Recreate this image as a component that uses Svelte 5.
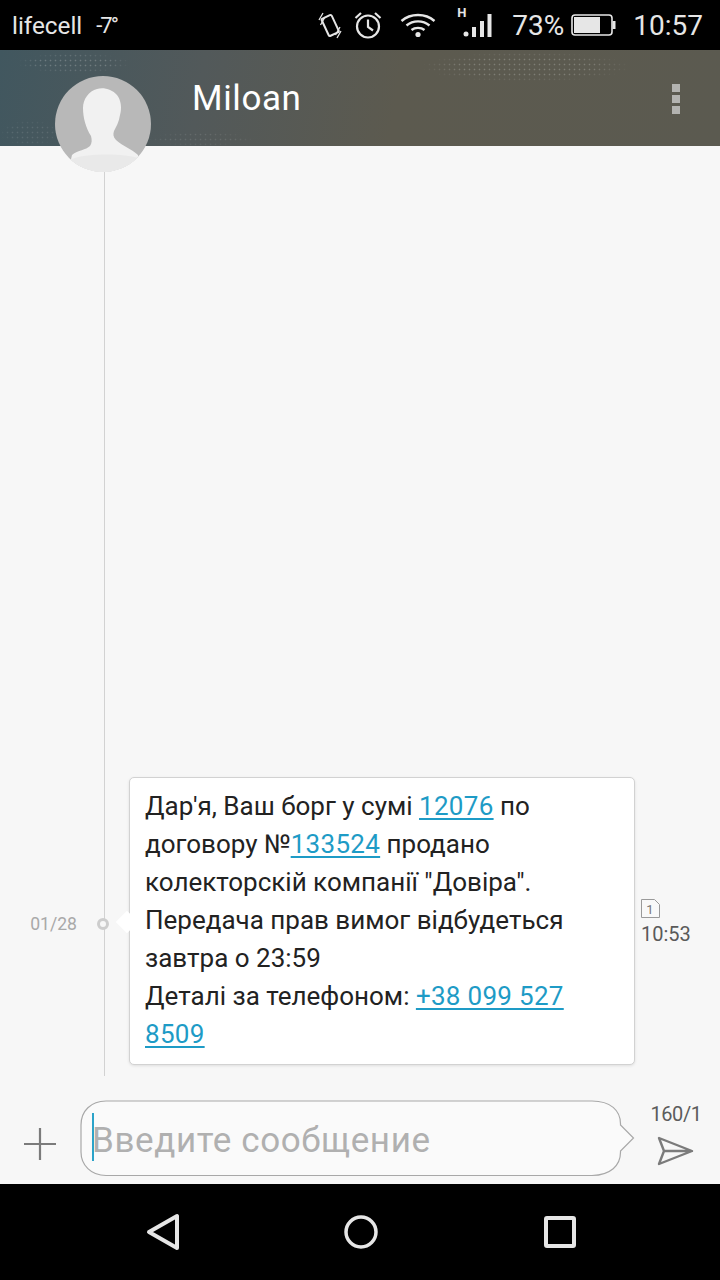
<script>
  const lines = [
    [{ t: "Дар'я, Ваш борг у сумі " }, { t: "12076", link: true }, { t: " по" }],
    [{ t: "договору №" }, { t: "133524", link: true }, { t: " продано" }],
    [{ t: 'колекторскій компанії "Довіра".' }],
    [{ t: "Передача прав вимог відбудеться" }],
    [{ t: "завтра о 23:59" }],
    [{ t: "Деталі за телефоном: " }, { t: "+38 099 527", link: true }],
    [{ t: "8509", link: true }],
  ];
</script>

<div class="screen">
  <div class="status">
    <span class="carrier">lifecell</span>
    <span class="temp">-7°</span>
    <span class="spacer"></span>
    <svg class="ic-vibrate" width="24" height="28" viewBox="0 0 24 28" fill="none" stroke="#e6e6e6">
      <rect x="6.5" y="5" width="11" height="19" rx="1.5" stroke-width="2" transform="rotate(-25 12 14)" />
      <path d="M1 9 5 2M2.5 14 7 6M17.5 24 22 16M19 27 23 20" stroke-width="1.3" />
    </svg>
    <svg class="ic-alarm" width="30" height="30" viewBox="0 0 30 30" fill="none" stroke="#e6e6e6" stroke-width="2.2">
      <circle cx="15" cy="16.5" r="11" />
      <path d="M15 9.500V17l5 3.500M2.500 8 8 3M27.500 8 22 3" />
    </svg>
    <svg class="ic-wifi" width="36" height="26" viewBox="0 0 36 26" fill="none" stroke="#e6e6e6" stroke-width="2.400">
      <path d="M1.500 9C10.500 1 25.500 1 34.500 9M6.500 13.500C13 8 23 8 29.500 13.500M11.500 18C15 15.200 21 15.200 24.500 18" />
      <circle cx="18" cy="22.500" r="2.600" fill="#e6e6e6" stroke="none" />
    </svg>
    <div class="signal">
      <span class="h">H</span>
      <svg width="30" height="26" viewBox="0 0 30 26" fill="#e6e6e6">
        <circle cx="4" cy="21" r="2.500" />
        <rect x="10" y="14" width="4" height="10" />
        <rect x="18" y="8" width="4" height="16" />
        <rect x="25.500" y="1" width="4" height="23" />
      </svg>
    </div>
    <span class="pct">73%</span>
    <svg class="ic-batt" width="46" height="24" viewBox="0 0 46 24" fill="none">
      <rect x="1" y="2" width="40" height="20" rx="3" stroke="#e6e6e6" stroke-width="1.600" />
      <rect x="3" y="4" width="26" height="16" fill="#e6e6e6" />
      <rect x="41.500" y="8" width="3" height="8" fill="#e6e6e6" />
    </svg>
    <span class="clock">10:57</span>
  </div>

  <div class="header">
    <span class="dots d1"></span>
    <span class="dots d2"></span>
    <span class="dots d3"></span>
    <span class="dots d4"></span>
    <span class="name">Miloan</span>
    <div class="menu"><i></i><i></i><i></i></div>
  </div>

  <svg class="avatar" width="96" height="96" viewBox="55 76 96 96">
    <circle cx="103" cy="124" r="48" fill="#b8b8b8" />
    <clipPath id="round"><circle cx="103" cy="124" r="48" /></clipPath>
    <g clip-path="url(#round)">
      <path
        fill="#f1f1f1"
        d="M97 89C103 87 112 89 117 95C121 100 122 108 120 115C119 122 116 127 114 131C113 134 113 137 116 140C122 146 132 149 138 155L140 172H68L72 155C78 150 86 150 90 146C92 143 92 140 91 136C86 128 83 118 83 108C83 99 89 91 97 89Z"
      />
      <path fill="#e9e9e9" d="M70 160C82 153 124 153 138 158V172H70Z" />
    </g>
  </svg>

  <div class="thread">
    <div class="rail"></div>
    <div class="entry">
      <span class="date">01/28</span>
      <span class="node"></span>
      <div class="bubble">
        <span class="tail"></span>
        {#each lines as line}
          <div class="line">
            {#each line as part}
              {#if part.link}<span class="link">{part.t}</span>{:else}{part.t}{/if}
            {/each}
          </div>
        {/each}
      </div>
      <div class="meta">
        <svg width="19" height="19" viewBox="0 0 19 19" fill="#f9f9f9" stroke="#9a9a9a">
          <path d="M0.500 0.500H13.500L18.500 5.500V18.500H0.500Z" />
          <text x="9" y="14.500" text-anchor="middle" class="sim">1</text>
        </svg>
        <span>10:53</span>
      </div>
    </div>
  </div>

  <div class="composer">
    <svg class="plus" width="32" height="32" viewBox="0 0 32 32" stroke="#7b7b7b" stroke-width="2.200">
      <path d="M0 16H32M16 0V32" />
    </svg>
    <div class="input">
      <svg class="input-shape" width="558" height="77" viewBox="0 0 558 77" fill="#fafafa" stroke="#a8a8a8" stroke-width="1.200">
        <path d="M26 1H512C530 1 541 10 540.500 25L553.500 38L540.500 51C541 66 530 75 512 75.500H26C11 75.500 1 65 1 52V25C1 11 11 1 26 1Z" />
      </svg>
      <span class="caret"></span>
      <span class="placeholder">Введите сообщение</span>
    </div>
    <div class="send">
      <span class="count">160/1</span>
      <svg width="38" height="30" viewBox="0 0 38 30" fill="none" stroke="#7b7b7b" stroke-width="2.400" stroke-linejoin="round">
        <path d="M2 2 35 15 2 28 7 15ZM7 15H35" />
      </svg>
    </div>
  </div>

  <div class="nav">
    <svg width="34" height="38" viewBox="0 0 34 38" fill="none" stroke="#e6e6e6" stroke-width="4" stroke-linejoin="round">
      <path d="M31 3V35L3 19Z" />
    </svg>
    <svg width="34" height="34" viewBox="0 0 34 34" fill="none" stroke="#e6e6e6" stroke-width="3.500">
      <circle cx="17" cy="17" r="15" />
    </svg>
    <svg width="32" height="32" viewBox="0 0 32 32" fill="none" stroke="#e6e6e6" stroke-width="4" stroke-linejoin="round">
      <rect x="2" y="2" width="28" height="28" rx="1" />
    </svg>
  </div>
</div>

<style>
  :global(body) {
    margin: 0;
    background: #f7f7f7;
  }

  .screen {
    position: relative;
    width: 720px;
    height: 1280px;
    display: flex;
    flex-direction: column;
    overflow: hidden;
    font-family: Roboto, "Noto Sans", sans-serif;
    background: #f7f7f7;
  }

  .status {
    height: 50px;
    flex: none;
    background: #000;
    color: #e6e6e6;
    display: flex;
    align-items: center;
    padding: 0 17px 0 12px;
    box-sizing: border-box;
  }

  .carrier {
    font-size: 24.3px;
  }

  .temp {
    font-size: 22px;
    margin-left: 14px;
    letter-spacing: -2px;
  }

  .spacer {
    flex: 1;
  }

  .ic-vibrate {
    margin-right: 11px;
  }

  .ic-alarm {
    margin-right: 17px;
  }

  .ic-wifi {
    margin-right: 26px;
  }

  .signal {
    position: relative;
    width: 30px;
    height: 26px;
    margin-right: 20px;
  }

  .signal svg {
    display: block;
    padding-top: 1px;
  }

  .h {
    position: absolute;
    left: -5px;
    top: -7px;
    font-size: 13px;
    font-weight: 700;
  }

  .pct {
    font-size: 28px;
    margin-right: 7px;
  }

  .ic-batt {
    margin-right: 16px;
  }

  .clock {
    font-size: 28px;
  }

  .header {
    position: relative;
    height: 96px;
    flex: none;
    display: flex;
    align-items: center;
    justify-content: space-between;
    padding: 1px 40px 0 192px;
    box-sizing: border-box;
    background: linear-gradient(100deg, #41575f 0%, #52595a 28%, #5c5a4f 55%, #5b5a50 100%);
    color: #fff;
  }

  .dots {
    position: absolute;
    background-image: radial-gradient(circle, rgba(255, 255, 255, 0.22) 0.7px, transparent 1.1px);
    background-size: 5px 5px;
    -webkit-mask-image: radial-gradient(ellipse at center, #000 45%, transparent 72%);
    mask-image: radial-gradient(ellipse at center, #000 45%, transparent 72%);
  }

  .d1 {
    left: 18px;
    top: 3px;
    width: 112px;
    height: 20px;
  }

  .d2 {
    left: 0;
    top: 70px;
    width: 60px;
    height: 26px;
    opacity: 0.5;
  }

  .d3 {
    left: 148px;
    top: 82px;
    width: 106px;
    height: 14px;
    opacity: 0.5;
  }

  .d4 {
    left: 422px;
    top: 2px;
    width: 208px;
    height: 30px;
  }

  .name {
    position: relative;
    font-size: 35px;
    letter-spacing: 0.6px;
  }

  .menu {
    position: relative;
    display: flex;
    flex-direction: column;
    gap: 3px;
  }

  .menu i {
    display: block;
    width: 8px;
    height: 8px;
    background: #b3b3b0;
  }

  .avatar {
    position: absolute;
    left: 55px;
    top: 76px;
    z-index: 2;
  }

  .thread {
    position: relative;
    flex: 1;
    display: flex;
    flex-direction: column;
    justify-content: flex-end;
    padding-bottom: 15px;
    min-height: 0;
  }

  .rail {
    position: absolute;
    left: 104px;
    top: 26px;
    bottom: 4px;
    width: 1px;
    background: #d2d2d2;
  }

  .entry {
    display: flex;
    align-items: center;
  }

  .date {
    width: 77px;
    margin-top: 6px;
    text-align: right;
    font-size: 17.6px;
    color: #a9a9a9;
    flex: none;
  }

  .node {
    position: relative;
    flex: none;
    width: 6px;
    height: 6px;
    margin: 6px 0 0 20px;
    border: 3px solid #cdcdcd;
    border-radius: 50%;
    background: #f7f7f7;
  }

  .bubble {
    position: relative;
    flex: none;
    width: 506px;
    height: 288px;
    box-sizing: border-box;
    margin-left: 20px;
    padding: 9px 0 0 15px;
    background: #fff;
    border: 1px solid #d2d2d2;
    border-radius: 5px;
    box-shadow: 0 1px 3px rgba(0, 0, 0, 0.1);
    font-size: 26px;
    line-height: 38px;
    color: #222;
  }

  .tail {
    position: absolute;
    left: -11px;
    top: 136px;
    width: 16px;
    height: 16px;
    background: #fff;
    transform: rotate(45deg);
  }

  .line {
    position: relative;
    white-space: pre;
  }

  .link {
    color: #1e9bc6;
    letter-spacing: 0.3px;
    text-decoration: underline;
    text-underline-offset: 3px;
    text-decoration-thickness: 1.500px;
  }

  .meta {
    flex: none;
    margin: 2px 0 0 6px;
    display: flex;
    flex-direction: column;
    gap: 4px;
    font-size: 20px;
    color: #5a5a5a;
  }

  .meta svg {
    display: block;
  }

  .sim {
    font-size: 13px;
    fill: #777;
    stroke: none;
    font-family: Roboto, sans-serif;
  }

  .composer {
    height: 104px;
    flex: none;
    display: flex;
    align-items: flex-start;
    box-sizing: border-box;
    padding-top: 20px;
  }

  .plus {
    flex: none;
    margin: 28px 0 0 24px;
  }

  .input {
    position: relative;
    flex: none;
    width: 558px;
    height: 77px;
    margin-left: 24px;
  }

  .input-shape {
    position: absolute;
    inset: 0;
  }

  .caret {
    position: absolute;
    left: 12px;
    top: 13px;
    width: 2px;
    height: 48px;
    background: #2ba3c9;
  }

  .placeholder {
    position: absolute;
    left: 12px;
    top: 22px;
    font-size: 35px;
    line-height: 38px;
    letter-spacing: 0.6px;
    color: #b0b0b0;
  }

  .send {
    flex: none;
    display: flex;
    flex-direction: column;
    align-items: center;
    margin: 2px 0 0 -7px;
    width: 90px;
    gap: 10px;
    color: #5c5c5c;
    font-size: 20px;
    letter-spacing: -0.4px;
  }

  .nav {
    height: 96px;
    flex: none;
    background: #000;
    display: flex;
    align-items: center;
    padding-left: 146px;
    gap: 164px;
  }

  .nav svg:last-child {
    margin-left: 2px;
  }
</style>
